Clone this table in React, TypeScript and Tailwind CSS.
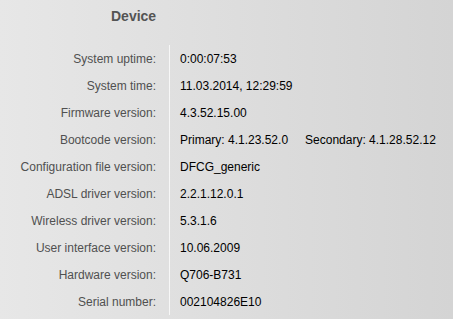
const rows: [string, React.ReactNode][] = [
  ["System uptime:", "0:00:07:53"],
  ["System time:", "11.03.2014, 12:29:59"],
  ["Firmware version:", "4.3.52.15.00"],
  [
    "Bootcode version:",
    <span className="flex gap-[17px]">
      <span>Primary: 4.1.23.52.0</span>
      <span>Secondary: 4.1.28.52.12</span>
    </span>,
  ],
  ["Configuration file version:", "DFCG_generic"],
  ["ADSL driver version:", "2.2.1.12.0.1"],
  ["Wireless driver version:", "5.3.1.6"],
  ["User interface version:", "10.06.2009"],
  ["Hardware version:", "Q706-B731"],
  ["Serial number:", "002104826E10"],
];

export default function App() {
  return (
    <div className="h-[319px] w-[453px] overflow-hidden bg-gradient-to-r from-[#e7e7e7] to-[#d4d4d4] font-['Liberation_Sans',Arial,sans-serif]">
      <h1 className="pl-[111px] pt-[8px] text-[14px] font-bold leading-[16px] text-[#545454]">
        Device
      </h1>
      <div className="mt-[21px] flex">
        <div className="w-[170px] border-r border-[#f7f7f7]">
          {rows.map(([label]) => (
            <div
              key={label}
              className="h-[27px] pr-[13px] pt-[1px] text-right text-[12px] leading-[27px] text-[#505050]"
            >
              {label}
            </div>
          ))}
        </div>
        <div className="pl-[10px]">
          {rows.map(([label, value]) => (
            <div key={label} className="flex h-[27px] items-center pt-[2px] text-[12px] leading-[27px] text-black">
              {value}
            </div>
          ))}
        </div>
      </div>
    </div>
  );
}
